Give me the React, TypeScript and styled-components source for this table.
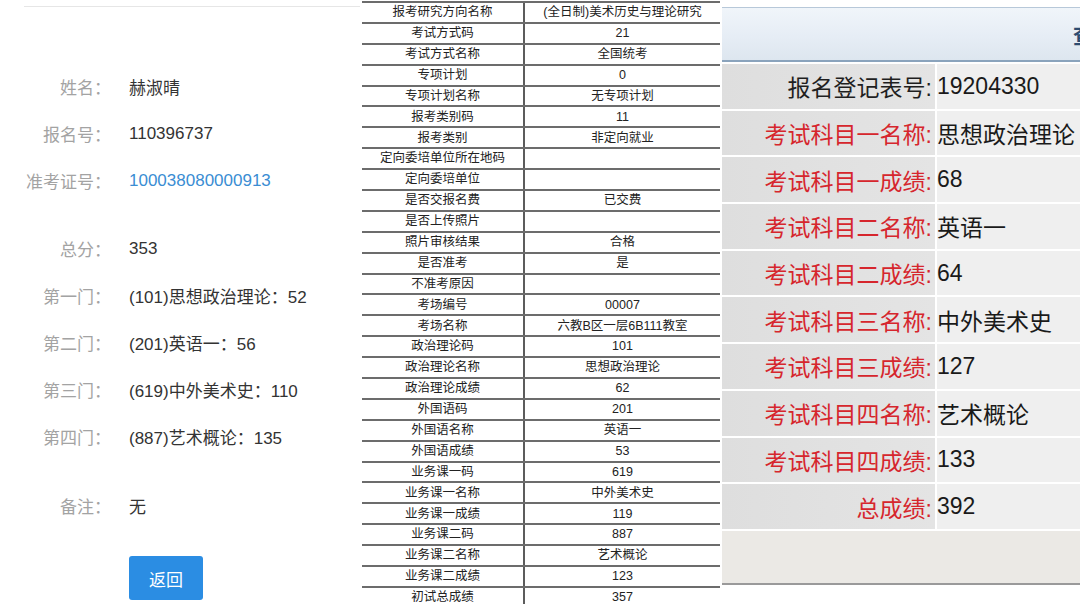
import React from "react";
import styled, { createGlobalStyle } from "styled-components";

const GlobalStyle = createGlobalStyle`
  html, body { margin: 0; padding: 0; background: #ffffff; }
  body { font-family: "Liberation Sans", "Noto Sans CJK SC", sans-serif; }
  * { box-sizing: border-box; }
`;

const Page = styled.div`
  width: 1080px;
  height: 604px;
  overflow: hidden;
  display: grid;
  grid-template-columns: 360px 358px 360px;
  column-gap: 2px;
  background: #ffffff;
`;

/* ---------- left panel ---------- */
const LeftPanel = styled.section`
  display: flex;
  flex-direction: column;
  font-family: "Liberation Sans", "Noto Sans CJK SC", sans-serif;
  font-size: 17px;
`;

const TopRule = styled.div`
  margin: 6px 0 0 24px;
  height: 1px;
  background: #e6e6e6;
`;

const Group = styled.div<{ $gap: number }>`
  display: flex;
  flex-direction: column;
  margin-top: ${(p) => p.$gap}px;
`;

const InfoRow = styled.div`
  display: grid;
  grid-template-columns: 111px 1fr;
  column-gap: 18px;
  height: 47px;
  align-items: center;
`;

const InfoLabel = styled.span`
  text-align: right;
  color: #a3a3a3;
  white-space: nowrap;
`;

const InfoValue = styled.span<{ $link?: boolean }>`
  color: ${(p) => (p.$link ? "#3a8dd3" : "#333333")};
  white-space: nowrap;
`;

const BackButton = styled.button`
  margin: 27px 0 0 129px;
  width: 74px;
  height: 44px;
  border: none;
  border-radius: 3px;
  background: #2b8de3;
  color: #ffffff;
  font-family: "Liberation Sans", "Noto Sans CJK SC", sans-serif;
  font-size: 17px;
  padding: 0;
`;

/* ---------- middle table ---------- */
const MidPanel = styled.section`
  display: flex;
  flex-direction: column;
  padding-top: 1px;
`;

const TableRow = styled.div`
  display: grid;
  grid-template-columns: 163px 1fr;
  height: 20.9px;
  border-top: 2px solid #6c6c6c;
  font-family: "Liberation Sans", "Noto Sans CJK SC", sans-serif;
  font-size: 12.5px;
  color: #222222;
`;

const TableCell = styled.div<{ $key?: boolean }>`
  display: flex;
  align-items: center;
  justify-content: center;
  white-space: nowrap;
  line-height: 1;
  border-right: ${(p) => (p.$key ? "2px solid #5c5c5c" : "none")};
`;

/* ---------- right panel ---------- */
const RightPanel = styled.section`
  display: flex;
  flex-direction: column;
  overflow: hidden;
  font-family: "Liberation Sans", "Noto Sans CJK SC", sans-serif;
`;

const Header = styled.div`
  margin-top: 7px;
  height: 55px;
  border-top: 1px solid #b7c8d9;
  border-bottom: 2px solid #8aa3bc;
  background: linear-gradient(#f0f5fa, #e6edf5 55%, #dde6ef);
  display: flex;
  align-items: center;
  padding-left: 351px;
  white-space: nowrap;
  font-size: 21px;
  font-weight: 700;
  color: #2d4b70;
`;

const ScoreList = styled.div`
  margin-top: 2px;
  display: flex;
  flex-direction: column;
  row-gap: 2px;
`;

const ScoreRow = styled.div`
  display: grid;
  grid-template-columns: 213px 1fr;
  column-gap: 2px;
  height: 44.7px;
  font-size: 23px;
`;

const ScoreLabel = styled.div<{ $red: boolean }>`
  background: linear-gradient(90deg, #dedede, #e4e4e4);
  color: ${(p) => (p.$red ? "#d6262d" : "#1f1f1f")};
  display: flex;
  align-items: center;
  justify-content: flex-end;
  padding-right: 3px;
  white-space: nowrap;
`;

const ScoreValue = styled.div`
  background: #efefef;
  color: #1a1a1a;
  display: flex;
  align-items: center;
  padding-left: 0;
  white-space: nowrap;
`;

const Footer = styled.div`
  margin-top: 2px;
  height: 54px;
  background: #ebe9e5;
  border-bottom: 2px solid #9a9a9a;
`;

const leftGroups: { gap: number; rows: [string, string, boolean?][] }[] = [
  {
    gap: 56,
    rows: [
      ["姓名：", "赫淑晴"],
      ["报名号：", "110396737"],
      ["准考证号：", "100038080000913", true],
    ],
  },
  {
    gap: 21,
    rows: [
      ["总分：", "353"],
      ["第一门：", "(101)思想政治理论：52"],
      ["第二门：", "(201)英语一：56"],
      ["第三门：", "(619)中外美术史：110"],
      ["第四门：", "(887)艺术概论：135"],
    ],
  },
  {
    gap: 22,
    rows: [["备注：", "无"]],
  },
];

const tableRows: [string, string][] = [
  ["报考研究方向名称", "(全日制)美术历史与理论研究"],
  ["考试方式码", "21"],
  ["考试方式名称", "全国统考"],
  ["专项计划", "0"],
  ["专项计划名称", "无专项计划"],
  ["报考类别码", "11"],
  ["报考类别", "非定向就业"],
  ["定向委培单位所在地码", ""],
  ["定向委培单位", ""],
  ["是否交报名费", "已交费"],
  ["是否上传照片", ""],
  ["照片审核结果", "合格"],
  ["是否准考", "是"],
  ["不准考原因", ""],
  ["考场编号", "00007"],
  ["考场名称", "六教B区一层6B111教室"],
  ["政治理论码", "101"],
  ["政治理论名称", "思想政治理论"],
  ["政治理论成绩", "62"],
  ["外国语码", "201"],
  ["外国语名称", "英语一"],
  ["外国语成绩", "53"],
  ["业务课一码", "619"],
  ["业务课一名称", "中外美术史"],
  ["业务课一成绩", "119"],
  ["业务课二码", "887"],
  ["业务课二名称", "艺术概论"],
  ["业务课二成绩", "123"],
  ["初试总成绩", "357"],
];

const scoreRows: [string, string, boolean][] = [
  ["报名登记表号:", "19204330", false],
  ["考试科目一名称:", "思想政治理论", true],
  ["考试科目一成绩:", "68", true],
  ["考试科目二名称:", "英语一", true],
  ["考试科目二成绩:", "64", true],
  ["考试科目三名称:", "中外美术史", true],
  ["考试科目三成绩:", "127", true],
  ["考试科目四名称:", "艺术概论", true],
  ["考试科目四成绩:", "133", true],
  ["总成绩:", "392", true],
];

export default function App() {
  return (
    <>
      <GlobalStyle />
      <Page>
        <LeftPanel>
          <TopRule />
          {leftGroups.map((g, gi) => (
            <Group key={gi} $gap={g.gap}>
              {g.rows.map(([label, value, link]) => (
                <InfoRow key={label}>
                  <InfoLabel>{label}</InfoLabel>
                  <InfoValue $link={!!link}>{value}</InfoValue>
                </InfoRow>
              ))}
            </Group>
          ))}
          <BackButton type="button">返回</BackButton>
        </LeftPanel>

        <MidPanel>
          {tableRows.map(([k, v]) => (
            <TableRow key={k}>
              <TableCell $key>{k}</TableCell>
              <TableCell>{v}</TableCell>
            </TableRow>
          ))}
        </MidPanel>

        <RightPanel>
          <Header>查询结果</Header>
          <ScoreList>
            {scoreRows.map(([label, value, red]) => (
              <ScoreRow key={label}>
                <ScoreLabel $red={red}>{label}</ScoreLabel>
                <ScoreValue>{value}</ScoreValue>
              </ScoreRow>
            ))}
          </ScoreList>
          <Footer />
        </RightPanel>
      </Page>
    </>
  );
}
